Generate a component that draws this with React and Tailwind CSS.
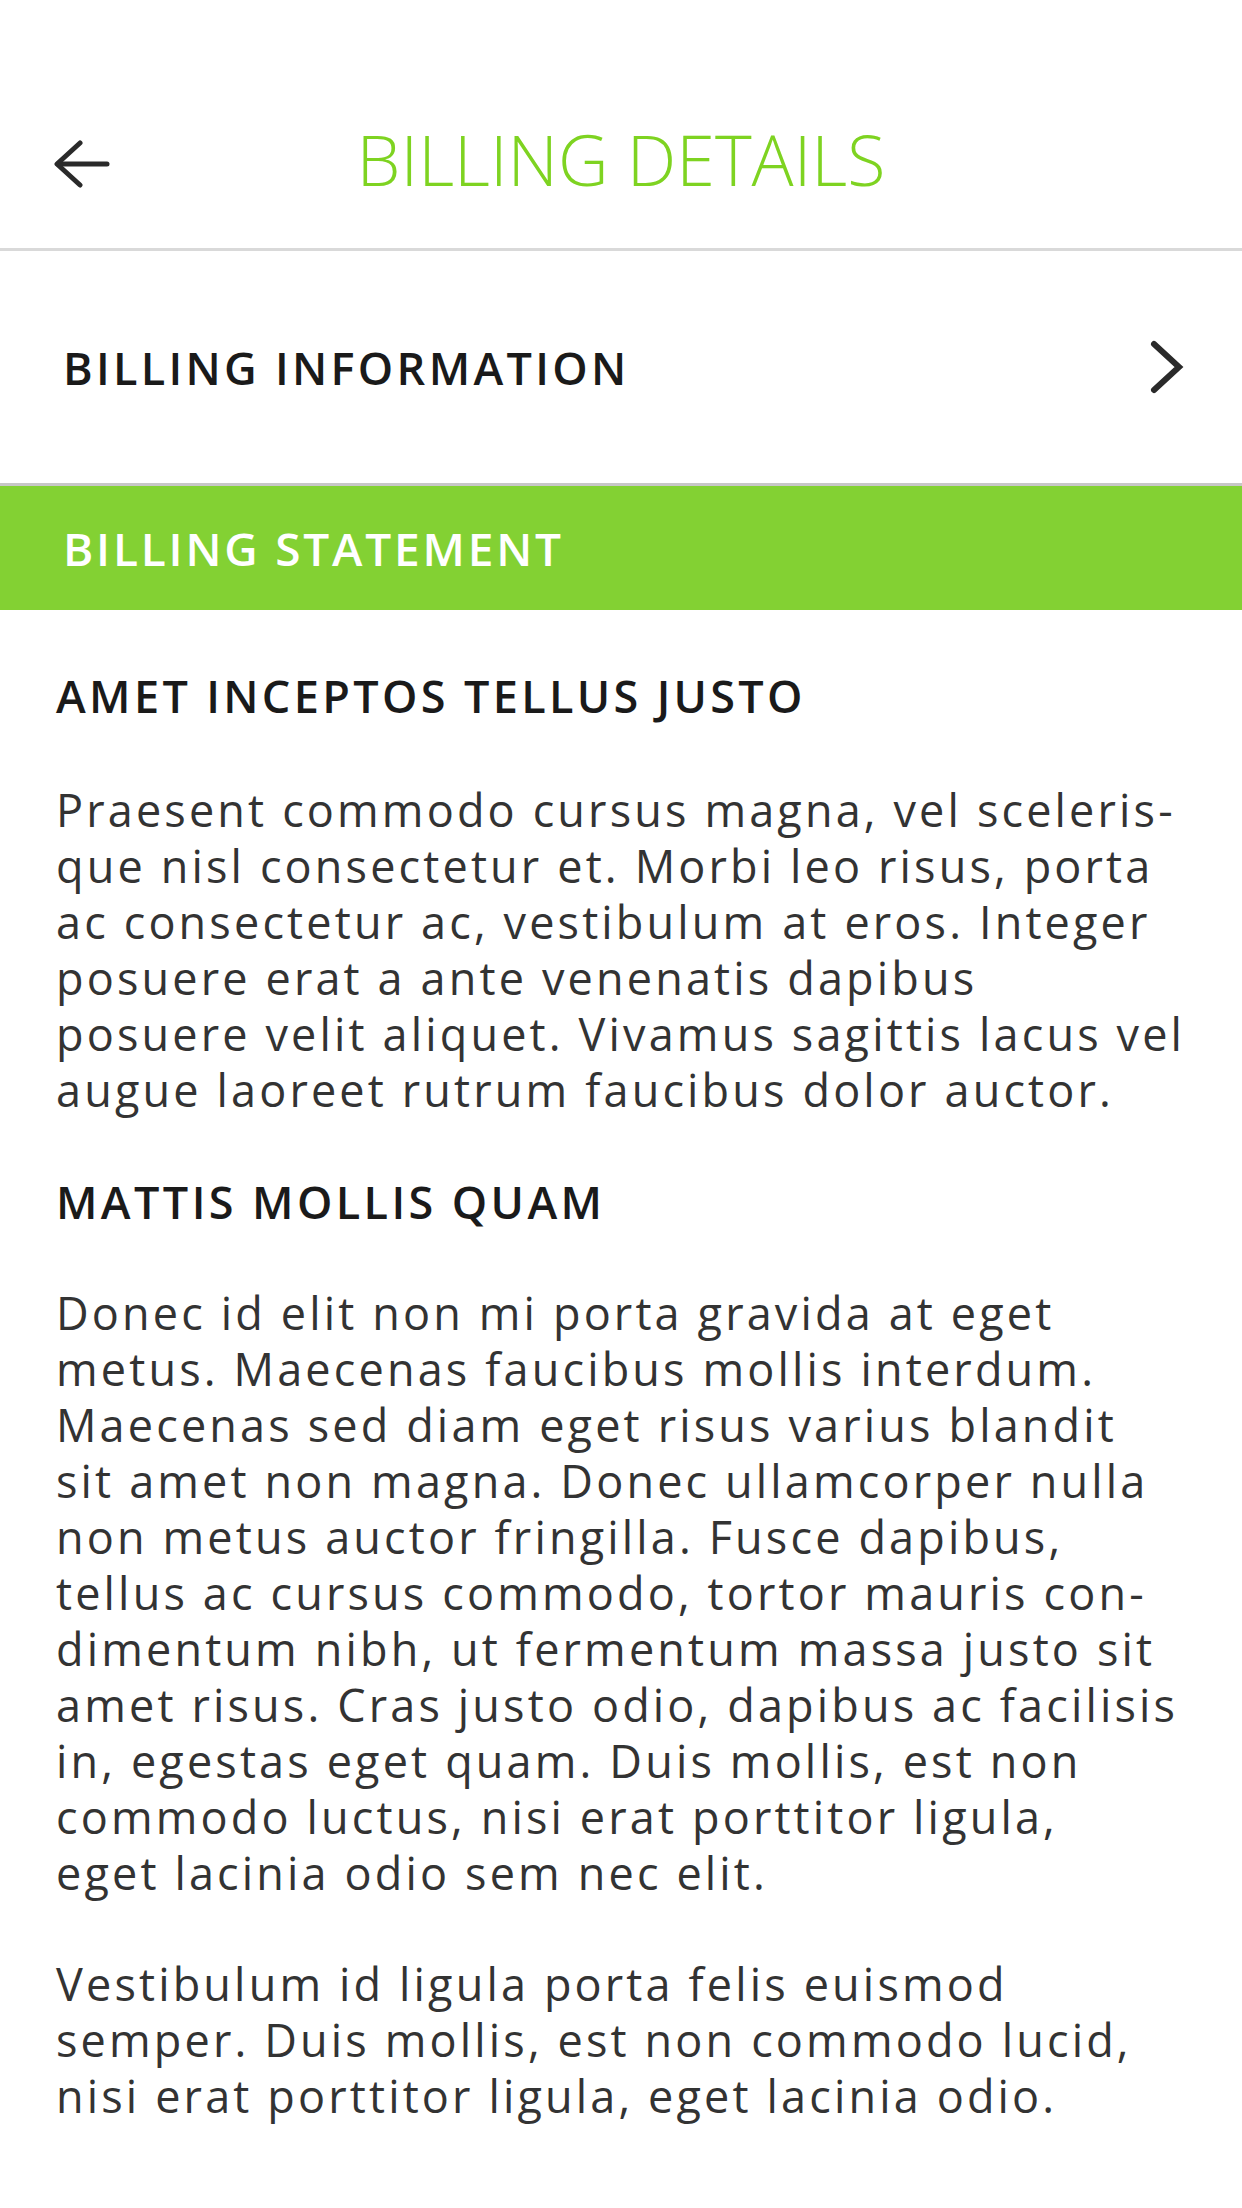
export default function App() {
  const font = { fontFamily: '"Open Sans", "Noto Sans", sans-serif' };
  return (
    <div className="w-[1242px] min-h-[2208px] bg-white" style={font}>
      <header className="pt-[70px] h-[251px] border-b-[3px] border-[#d9d9d9] flex items-center">
        <div className="w-[162px] pl-[54px] flex items-center">
          <svg width="56" height="50" viewBox="0 0 56 50" fill="none" className="mt-[10px]">
            <path d="M26 4 L3 25 L26 46" stroke="#2a2a2a" strokeWidth="5" strokeLinecap="round" strokeLinejoin="round" />
            <path d="M4 25 H53" stroke="#2a2a2a" strokeWidth="5" strokeLinecap="round" />
          </svg>
        </div>
        <h1 className="flex-1 text-center text-[70px] font-light text-[#7ed321] leading-none">
          BILLING DETAILS
        </h1>
        <div className="w-[162px]" />
      </header>

      <div className="h-[235px] border-b-[3px] border-[#c7c7c7] flex items-center justify-between pl-[63px] pr-[58px]">
        <span className="text-[45px] font-semibold text-[#1a1a1a] tracking-[3.3px] leading-none">
          BILLING INFORMATION
        </span>
        <svg width="40" height="60" viewBox="0 0 40 60" fill="none">
          <path d="M10 7 L35 30 L10 53" stroke="#2a2a2a" strokeWidth="6" strokeLinecap="round" strokeLinejoin="miter" />
        </svg>
      </div>

      <div className="h-[124px] bg-[#83d133] flex items-center pl-[63px]">
        <span className="text-[46px] font-semibold text-white tracking-[2.8px] leading-none">
          BILLING STATEMENT
        </span>
      </div>

      <main className="px-[56px] pt-[58px] text-[45px] leading-[56px] whitespace-nowrap">
        <h2 className="font-semibold text-[#1a1a1a] tracking-[3.35px]">AMET INCEPTOS TELLUS JUSTO</h2>
        <p className="mt-[58px] text-[#333333] tracking-[3.15px]">
          Praesent commodo cursus magna, vel sceleris-<br />
          que nisl consectetur et. Morbi leo risus, porta<br />
          ac consectetur ac, vestibulum at eros. Integer<br />
          posuere erat a ante venenatis dapibus<br />
          posuere velit aliquet. Vivamus sagittis lacus vel<br />
          augue laoreet rutrum faucibus dolor auctor.
        </p>
        <h2 className="mt-[56px] font-semibold text-[#1a1a1a] tracking-[3.4px]">MATTIS MOLLIS QUAM</h2>
        <p className="mt-[55px] text-[#333333] tracking-[3.15px]">
          Donec id elit non mi porta gravida at eget<br />
          metus. Maecenas faucibus mollis interdum.<br />
          Maecenas sed diam eget risus varius blandit<br />
          sit amet non magna. Donec ullamcorper nulla<br />
          non metus auctor fringilla. Fusce dapibus,<br />
          tellus ac cursus commodo, tortor mauris con-<br />
          dimentum nibh, ut fermentum massa justo sit<br />
          amet risus. Cras justo odio, dapibus ac facilisis<br />
          in, egestas eget quam. Duis mollis, est non<br />
          commodo luctus, nisi erat porttitor ligula,<br />
          eget lacinia odio sem nec elit.
        </p>
        <p className="mt-[55px] text-[#333333] tracking-[3.15px]">
          Vestibulum id ligula porta felis euismod<br />
          semper. Duis mollis, est non commodo lucid,<br />
          nisi erat porttitor ligula, eget lacinia odio.
        </p>
      </main>
    </div>
  );
}
